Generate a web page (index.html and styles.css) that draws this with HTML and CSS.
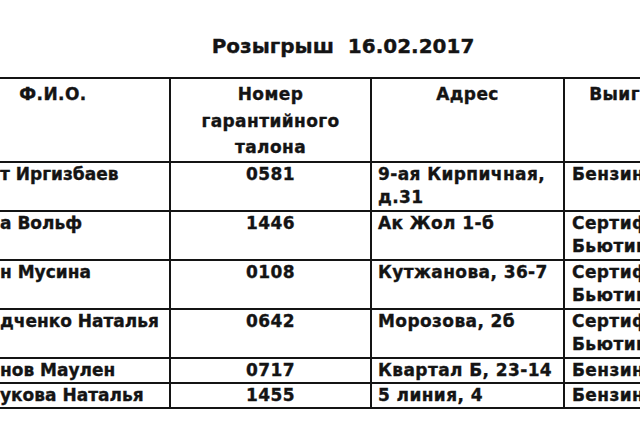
FILE: index.html
```html
<!DOCTYPE html>
<html lang="ru">
<head>
<meta charset="utf-8">
<title>Розыгрыш 16.02.2017</title>
<link rel="stylesheet" href="styles.css">
</head>
<body>
<div class="page">
  <h1 class="title">Розыгрыш&nbsp;&nbsp;16.02.2017</h1>
  <table class="draw">
    <colgroup>
      <col class="c-name">
      <col class="c-num">
      <col class="c-addr">
      <col class="c-prize">
    </colgroup>
    <thead>
      <tr class="head">
        <th>Ф.И.О.</th>
        <th>Номер<br>гарантийного<br>талона</th>
        <th>Адрес</th>
        <th>Выигрыш</th>
      </tr>
    </thead>
    <tbody>
      <tr class="tall">
        <td class="name">т Иргизбаев</td>
        <td class="num">0581</td>
        <td class="addr">9-ая Кирпичная,<br>д.31</td>
        <td class="prize">Бензин 20 л</td>
      </tr>
      <tr class="tall">
        <td class="name">а Вольф</td>
        <td class="num">1446</td>
        <td class="addr">Ак Жол 1-б</td>
        <td class="prize">Сертификат<br>Бьютик</td>
      </tr>
      <tr class="tall">
        <td class="name">н Мусина</td>
        <td class="num">0108</td>
        <td class="addr">Кутжанова, 36-7</td>
        <td class="prize">Сертификат<br>Бьютик</td>
      </tr>
      <tr class="tall">
        <td class="name">дченко Наталья</td>
        <td class="num">0642</td>
        <td class="addr">Морозова, 2б</td>
        <td class="prize">Сертификат<br>Бьютик</td>
      </tr>
      <tr class="short">
        <td class="name">нов Маулен</td>
        <td class="num">0717</td>
        <td class="addr">Квартал Б, 23-14</td>
        <td class="prize">Бензин 20 л</td>
      </tr>
      <tr class="short">
        <td class="name">укова Наталья</td>
        <td class="num">1455</td>
        <td class="addr">5 линия, 4</td>
        <td class="prize">Бензин 20 л</td>
      </tr>
    </tbody>
  </table>
</div>
</body>
</html>
```
FILE: styles.css
```css
html, body {
  margin: 0;
  padding: 0;
  background: #ffffff;
  overflow: hidden;
}

.page {
  width: 640px;
  height: 426px;
  overflow: hidden;
  font-family: "DejaVu Sans", "Liberation Sans", sans-serif;
  font-weight: bold;
  color: #141414;
  -webkit-text-stroke: 0.35px #141414;
}

.title {
  margin: 0 0 19px 0;
  padding: 34px 0 0 46px;
  font-size: 20px;
  line-height: 24px;
  font-weight: bold;
  text-align: center;
}

.draw {
  margin-left: -65px;
  border-collapse: collapse;
  table-layout: fixed;
  width: 776px;
  font-size: 17px;
  line-height: 23px;
  letter-spacing: 0.4px;
}

.c-name { width: 234px; }
.c-num { width: 201px; }
.c-addr { width: 193px; }
.c-prize { width: 148px; }

.draw th,
.draw td {
  border: 2px solid #141414;
  padding: 0 7px;
  vertical-align: top;
  overflow: hidden;
  white-space: nowrap;
}

.draw th {
  text-align: center;
  font-weight: bold;
  line-height: 26.5px;
  padding: 2px 0 0 0;
}

.head { height: 82px; }
.tall { height: 49px; }
.short { height: 25px; }

.draw td.name {
  padding-left: 63px;
  letter-spacing: 0;
}

.draw td.num {
  text-align: center;
}

.draw td.addr {
  padding-left: 6px;
  padding-right: 0;
}
```
